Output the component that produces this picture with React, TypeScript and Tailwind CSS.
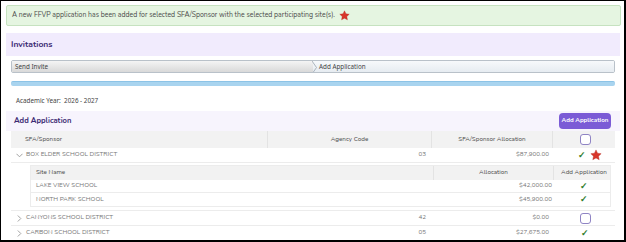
import React from "react";

const Star = ({ size = 12 }: { size?: number }) => (
  <svg width={size} height={size} viewBox="0 0 24 24" className="inline-block">
    <path
      d="M12 1.8l3.1 6.6 7.2.9-5.3 5 1.4 7.1L12 17.9l-6.4 3.5L7 14.3l-5.3-5 7.2-.9z"
      fill="#d8352a"
      stroke="#b52a22"
      strokeWidth="0.8"
      strokeLinejoin="round"
    />
  </svg>
);

const Check = () => <span className="text-[#2f7d2a] text-[9px] font-bold leading-none">✓</span>;

const Box = () => (
  <span className="inline-block w-[11px] h-[11px] rounded-[3px] border border-[#8f84c4] bg-white" />
);

const ChevronDown = () => (
  <svg width="7" height="5" viewBox="0 0 7 5">
    <path d="M0.5 0.8 L3.5 3.8 L6.5 0.8" fill="none" stroke="#999" strokeWidth="0.9" />
  </svg>
);
const ChevronRight = () => (
  <svg width="5" height="7" viewBox="0 0 5 7">
    <path d="M0.8 0.5 L3.8 3.5 L0.8 6.5" fill="none" stroke="#999" strokeWidth="0.9" />
  </svg>
);

const font = { fontFamily: "Nunito, Lato, 'Noto Sans', sans-serif" };

export default function App() {
  const cols = "grid grid-cols-[13px_244px_164px_121px_64px]";
  const ncols = "grid grid-cols-[402px_121px_60px]";
  return (
    <div
      className="w-[626px] h-[242px] overflow-hidden bg-white border-l border-t border-black border-r-2 border-b-2 pl-[5px] pr-[3px] pt-[4px] text-[#555]"
      style={font}
    >
      {/* alert */}
      <div className="h-[21px] flex items-center gap-[4px] rounded-[2px] border border-[#c6e2c0] bg-[#e5f5e1] pl-[5px] text-[6.9px] text-[#4a4a4a]">
        <span>A new FFVP application has been added for selected SFA/Sponsor with the selected participating site(s).</span>
        <Star size={11} />
      </div>

      {/* invitations panel */}
      <div className="mt-[7px] mr-[1px]">
        <div className="h-[23px] flex items-center bg-[#f1ebfd] pl-[5px] text-[8.5px] font-bold text-[#3b2a73]">
          Invitations
        </div>
        <div className="px-[5px] pt-[4px]">
          {/* breadcrumb */}
          <div
            className="h-[13px] flex rounded-[2px] border border-[#b9c1c9] overflow-hidden text-[6.3px] text-[#444]"
            style={{ fontFamily: "'Noto Sans', 'Open Sans', sans-serif" }}
          >
            <div className="w-[301px] flex items-center pl-[3px] bg-gradient-to-b from-[#f4f4f4] to-[#d9d9d9]">
              Send Invite
            </div>
            <div className="relative flex-1 flex items-center pl-[6px] bg-gradient-to-b from-[#f7f9fb] to-[#e6ecf1]">
              <svg className="absolute left-[-1px] top-0" width="6" height="13" viewBox="0 0 6 13">
                <path d="M0 0 L4.5 6.5 L0 13" fill="none" stroke="#9aa4ae" strokeWidth="0.8" />
              </svg>
              Add Application
            </div>
          </div>
          {/* blue bar */}
          <div className="mt-[8px] h-[5px] rounded-[2px] bg-[#a9d4ef] border-t border-[#8cc3e6]" />
          {/* academic year */}
          <div
            className="mt-[11px] pl-[5px] text-[6.3px] text-[#444] h-[8px] leading-[8px]"
            style={{ fontFamily: "'Noto Sans', 'Open Sans', sans-serif" }}
          >
            Academic Year:&nbsp; 2026 - 2027
          </div>
        </div>

        {/* add application section */}
        <div className="mt-[6px] h-[20px] flex items-center justify-between bg-[#f7f4fd] pl-[8px] pr-[9px]">
          <span className="text-[7.6px] font-bold text-[#3b2a73]">Add Application</span>
          <button className="h-[16px] w-[52px] rounded-[4px] bg-[#7b5bd6] text-white text-[6.2px] font-bold">
            Add Application
          </button>
        </div>

        {/* table */}
        <div className="mx-[5px] text-[6.3px]">
          <div className={`${cols} h-[17px] bg-[#f2f2f2] text-[#4a4a4a]`}>
            <div />
            <div className="flex items-center pl-[1px] border-r border-[#e3e3e3]">SFA/Sponsor</div>
            <div className="flex items-center justify-center border-r border-[#e3e3e3]">Agency Code</div>
            <div className="flex items-center justify-center border-r border-[#e3e3e3]">SFA/Sponsor Allocation</div>
            <div className="flex items-center justify-center"><Box /></div>
          </div>
          <div className={`${cols} h-[15px] border-b border-[#ececec] text-[#777] uppercase`}>
            <div className="flex items-center justify-end pr-[1px]"><ChevronDown /></div>
            <div className="flex items-center pl-[2px]">Box Elder School District</div>
            <div className="flex items-center justify-end pr-[6px]">03</div>
            <div className="flex items-center justify-end pr-[4px]">$87,900.00</div>
            <div className="flex items-center justify-center gap-[4px] pl-[10px]"><Check /><Star size={12} /></div>
          </div>
          <div className="pl-[19px] pr-[4px] pt-[2px] pb-[3px] border-b border-[#ececec]">
            <div className="border border-[#ececec]">
              <div className={`${ncols} h-[14px] bg-[#f2f2f2] text-[#4a4a4a]`}>
                <div className="flex items-center pl-[5px]">Site Name</div>
                <div className="flex items-center justify-center border-l border-r border-[#e3e3e3]">Allocation</div>
                <div className="flex items-center justify-center">Add Application</div>
              </div>
              <div className={`${ncols} h-[13px] border-b border-[#ececec] text-[#777] uppercase`}>
                <div className="flex items-center pl-[5px]">Lake View School</div>
                <div className="flex items-center justify-end pr-[2px]">$42,000.00</div>
                <div className="flex items-center justify-center"><Check /></div>
              </div>
              <div className={`${ncols} h-[13px] text-[#777] uppercase`}>
                <div className="flex items-center pl-[5px]">North Park School</div>
                <div className="flex items-center justify-end pr-[2px]">$45,900.00</div>
                <div className="flex items-center justify-center"><Check /></div>
              </div>
            </div>
          </div>
          <div className={`${cols} h-[15px] border-b border-[#ececec] text-[#777] uppercase`}>
            <div className="flex items-center justify-end pr-[2px]"><ChevronRight /></div>
            <div className="flex items-center pl-[2px]">Canyons School District</div>
            <div className="flex items-center justify-end pr-[6px]">42</div>
            <div className="flex items-center justify-end pr-[4px]">$0.00</div>
            <div className="flex items-center justify-center"><Box /></div>
          </div>
          <div className={`${cols} h-[15px] border-b border-[#ececec] text-[#777] uppercase`}>
            <div className="flex items-center justify-end pr-[2px]"><ChevronRight /></div>
            <div className="flex items-center pl-[2px]">Carbon School District</div>
            <div className="flex items-center justify-end pr-[6px]">05</div>
            <div className="flex items-center justify-end pr-[4px]">$27,675.00</div>
            <div className="flex items-center justify-center"><Check /></div>
          </div>
          <div className={`${cols} h-[15px]`}>
            <div /><div /><div /><div />
            <div className="flex items-start justify-center pt-[1px]"><Box /></div>
          </div>
        </div>
      </div>
    </div>
  );
}
